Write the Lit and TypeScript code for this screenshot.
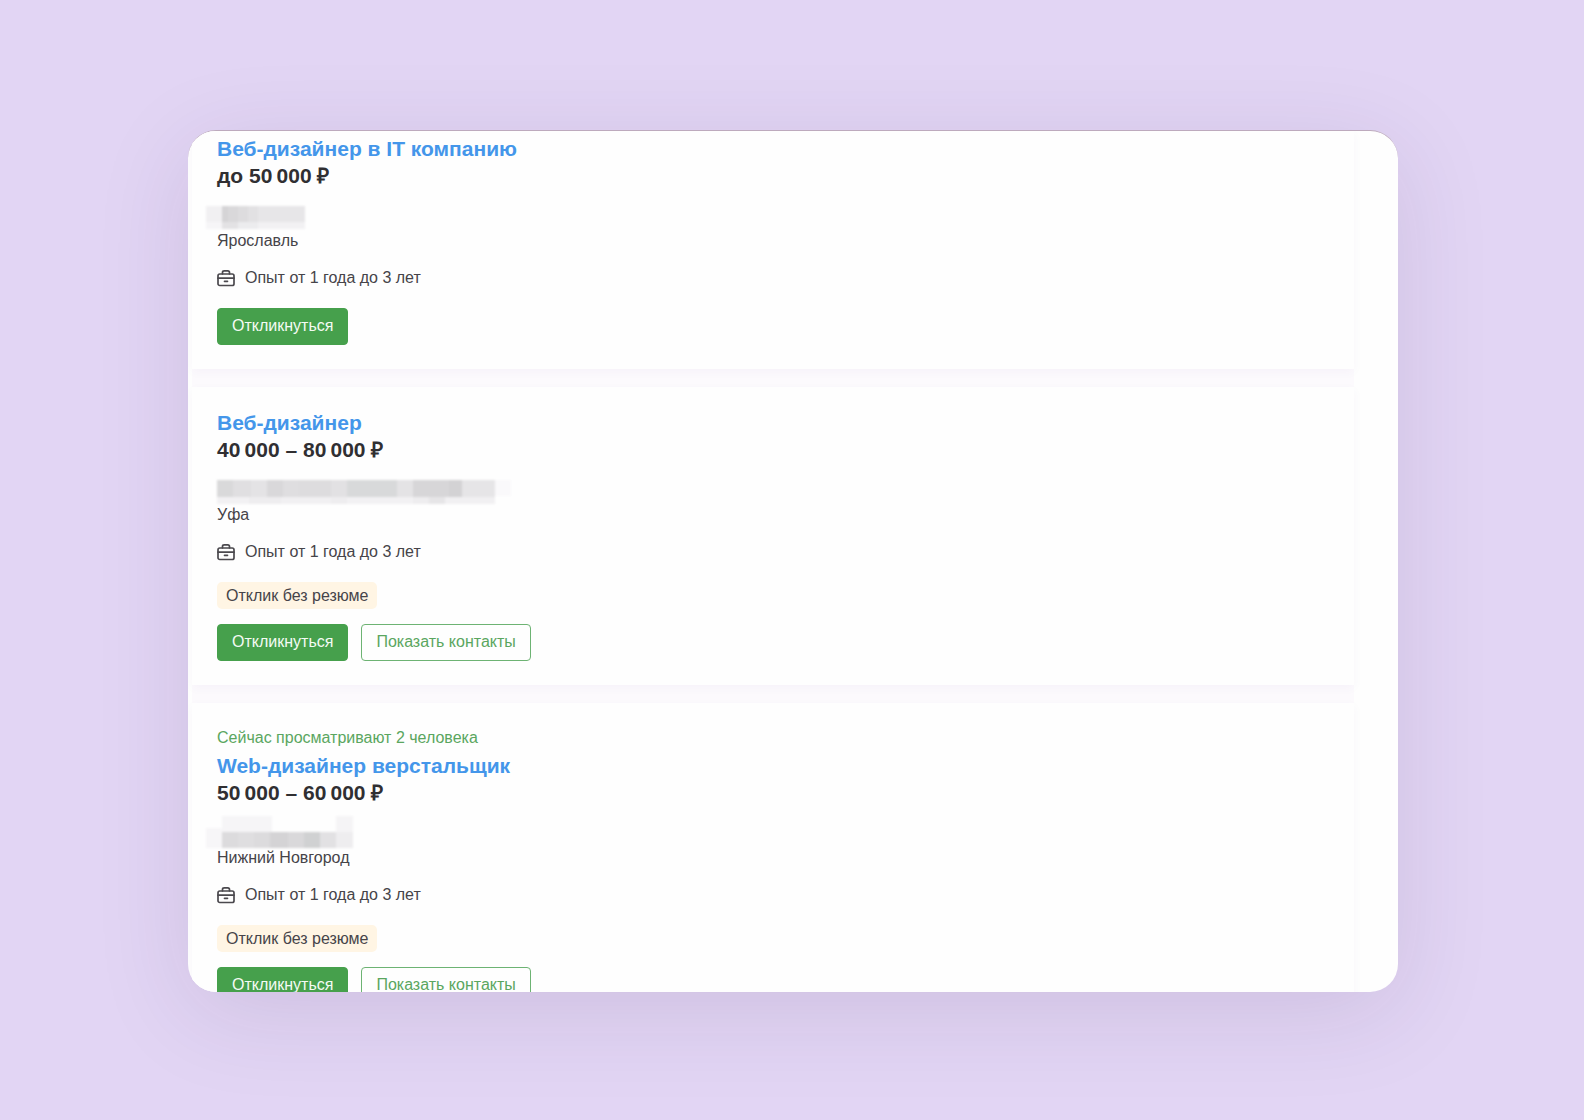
import { LitElement, css, html, svg, nothing } from "lit";
import { customElement, property } from "lit/decorators.js";

/** One block of a masked company name: x, y, width, height, fill. */
type Block = [number, number, number, number, string];

interface Mask {
  width: number;
  height: number;
  className: string;
  blocks: Block[];
}

interface Vacancy {
  title: string;
  salary: string;
  city: string;
  experience: string;
  viewers?: string;
  noResume: boolean;
  mask: Mask;
}

const VACANCIES: Vacancy[] = [
  {
    title: "Веб-дизайнер в IT компанию",
    salary: "до 50\u2009000 ₽",
    city: "Ярославль",
    experience: "Опыт от 1 года до 3 лет",
    noResume: false,
    mask: {
      width: 100,
      height: 24,
      className: "outdent",
      blocks: [
        [0, 0, 16, 16, "#f1f0f2"],
        [0, 16, 16, 7, "#f6f5f7"],
        [16, 0, 6, 16, "#d5d4d6"],
        [22, 0, 10, 16, "#d9d8da"],
        [32, 0, 10, 16, "#dddcde"],
        [42, 0, 10, 16, "#e2e1e3"],
        [52, 0, 47, 16, "#e7e6e8"],
        [16, 16, 16, 7, "#e3e2e4"],
        [32, 16, 20, 7, "#ececee"],
        [52, 16, 47, 7, "#f2f1f3"],
      ],
    },
  },
  {
    title: "Веб-дизайнер",
    salary: "40\u2009000 – 80\u2009000 ₽",
    city: "Уфа",
    experience: "Опыт от 1 года до 3 лет",
    noResume: true,
    mask: {
      width: 296,
      height: 24,
      className: "",
      blocks: [
        [0, 0, 16, 17, "#d9d9da"],
        [16, 0, 18, 17, "#e0dfe1"],
        [34, 0, 16, 17, "#e4e3e5"],
        [50, 0, 16, 17, "#d9d8da"],
        [66, 0, 16, 17, "#dfdee0"],
        [82, 0, 32, 17, "#dddcde"],
        [114, 0, 16, 17, "#e2e1e3"],
        [130, 0, 50, 17, "#d8d9da"],
        [180, 0, 16, 17, "#e4e3e5"],
        [196, 0, 36, 17, "#d7d6d8"],
        [232, 0, 13, 17, "#d3d2d4"],
        [245, 0, 33, 17, "#e6e5e7"],
        [278, 0, 16, 16, "#faf9fb"],
        [0, 17, 32, 7, "#f2f1f3"],
        [32, 17, 32, 7, "#eeedef"],
        [64, 17, 50, 7, "#f1f0f2"],
        [114, 17, 16, 7, "#eeedef"],
        [130, 17, 66, 7, "#f2f1f3"],
        [196, 17, 16, 7, "#eeedef"],
        [212, 17, 16, 7, "#e6e5e7"],
        [228, 17, 50, 7, "#f1f0f2"],
      ],
    },
  },
  {
    title: "Web-дизайнер верстальщик",
    salary: "50\u2009000 – 60\u2009000 ₽",
    city: "Нижний Новгород",
    experience: "Опыт от 1 года до 3 лет",
    viewers: "Сейчас просматривают 2 человека",
    noResume: true,
    mask: {
      width: 148,
      height: 34,
      className: "outdent tall",
      blocks: [
        [0, 12, 16, 20, "#f7f6f8"],
        [16, 0, 50, 16, "#f6f5f7"],
        [130, 0, 17, 16, "#f5f4f6"],
        [16, 16, 16, 16, "#dcdbdd"],
        [32, 16, 16, 16, "#dfdee0"],
        [48, 16, 16, 16, "#dcdbdd"],
        [64, 16, 18, 16, "#d4d3d5"],
        [82, 16, 16, 16, "#d9d8da"],
        [98, 16, 16, 16, "#d0d1d2"],
        [114, 16, 16, 16, "#e2e1e3"],
        [130, 16, 17, 16, "#eeedef"],
      ],
    },
  },
];

@customElement("vacancy-card")
class VacancyCard extends LitElement {
  @property({ attribute: false }) vacancy!: Vacancy;

  static styles = css`
    :host {
      display: block;
      padding: 22px 25px 24px;
      background: #fefefe;
      box-shadow: 0 3px 10px rgba(80, 40, 140, 0.035);
    }
    .viewers {
      margin: 0;
      padding: 1px 0 2px;
      line-height: 24px;
      color: #5aa660;
    }
    .title,
    .salary {
      margin: 0;
      font-size: 21px;
      line-height: 27px;
      font-weight: 700;
    }
    .title a {
      color: #4496ea;
      text-decoration: none;
    }
    .salary {
      color: #302f32;
    }
    .mask {
      display: block;
      margin-top: 17px;
      filter: blur(1px);
    }
    .outdent {
      margin-left: -11px;
    }
    .tall {
      margin-top: 10px;
      margin-bottom: -3px;
    }
    .city {
      margin: 0;
      line-height: 22px;
    }
    .experience {
      display: flex;
      align-items: center;
      gap: 10px;
      margin: 15px 0 0;
      line-height: 22px;
    }
    .icon {
      width: 18px;
      height: 18px;
      flex: none;
    }
    .tags {
      display: flex;
      margin-top: 19px;
    }
    .tag {
      padding: 0 9px;
      border-radius: 5px;
      background: #fff5e4;
      line-height: 27px;
    }
    .actions {
      display: flex;
      gap: 13px;
      margin-top: 19px;
    }
    .tags + .actions {
      margin-top: 15px;
    }
    .button {
      box-sizing: border-box;
      height: 37px;
      padding: 0 14px 2px;
      border: 1px solid #6db373;
      border-radius: 4px;
      background: transparent;
      color: #5aa660;
      font: inherit;
      cursor: pointer;
    }
    .primary {
      border-color: #46a04c;
      background: #46a04c;
      color: #f4fbf4;
    }
  `;

  render() {
    const v = this.vacancy;
    return html`
      ${v.viewers ? html`<p class="viewers">${v.viewers}</p>` : nothing}
      <h2 class="title"><a href="#">${v.title}</a></h2>
      <p class="salary">${v.salary}</p>
      <svg
        class="mask ${v.mask.className}"
        width=${v.mask.width}
        height=${v.mask.height}
        aria-hidden="true"
      >
        ${v.mask.blocks.map(
          ([x, y, w, h, fill]) =>
            svg`<rect x=${x} y=${y} width=${w} height=${h} fill=${fill}></rect>`
        )}
      </svg>
      <p class="city">${v.city}</p>
      <p class="experience">
        <svg
          class="icon"
          viewBox="0 0 18 18"
          fill="none"
          stroke="#4b494e"
          stroke-width="1.7"
          stroke-linejoin="round"
          stroke-linecap="round"
          aria-hidden="true"
        >
          <rect x="1" y="5" width="16" height="11.500" rx="1.800"></rect>
          <path d="M5.500 4.800V3.500Q5.500 1.800 7.200 1.800H10.800Q12.500 1.800 12.500 3.500V4.800"></path>
          <path d="M1 9.200H17M7.500 12.300H10.500"></path>
        </svg>
        <span>${v.experience}</span>
      </p>
      ${v.noResume
        ? html`<div class="tags"><span class="tag">Отклик без резюме</span></div>`
        : nothing}
      <div class="actions">
        <button class="button primary" type="button">Откликнуться</button>
        ${v.noResume
          ? html`<button class="button" type="button">Показать контакты</button>`
          : nothing}
      </div>
    `;
  }
}

@customElement("app-root")
class AppRoot extends LitElement {
  static styles = css`
    :host {
      display: flex;
      box-sizing: border-box;
      height: 100vh;
      padding: 130px 186px 128px 188px;
      background: #e2d5f4;
      color: #464449;
      font-family: "Liberation Sans", Arial, sans-serif;
      font-size: 16px;
    }
    .panel {
      flex: 1;
      box-sizing: border-box;
      overflow: hidden;
      padding: 0 44px 0 4px;
      border-top: 1px solid #bdaabd;
      border-radius: 28px;
      background: #fefefe;
      box-shadow: 0 20px 96px rgba(50, 25, 80, 0.115);
    }
    .list {
      display: flex;
      flex-direction: column;
      gap: 18px;
      background: #fcfafd;
    }
    .first {
      padding-top: 4px;
    }
  `;

  render() {
    return html`
      <main class="panel">
        <div class="list">
          ${VACANCIES.map(
            (v, i) =>
              html`<vacancy-card
                class=${i === 0 ? "first" : ""}
                .vacancy=${v}
              ></vacancy-card>`
          )}
        </div>
      </main>
    `;
  }
}
